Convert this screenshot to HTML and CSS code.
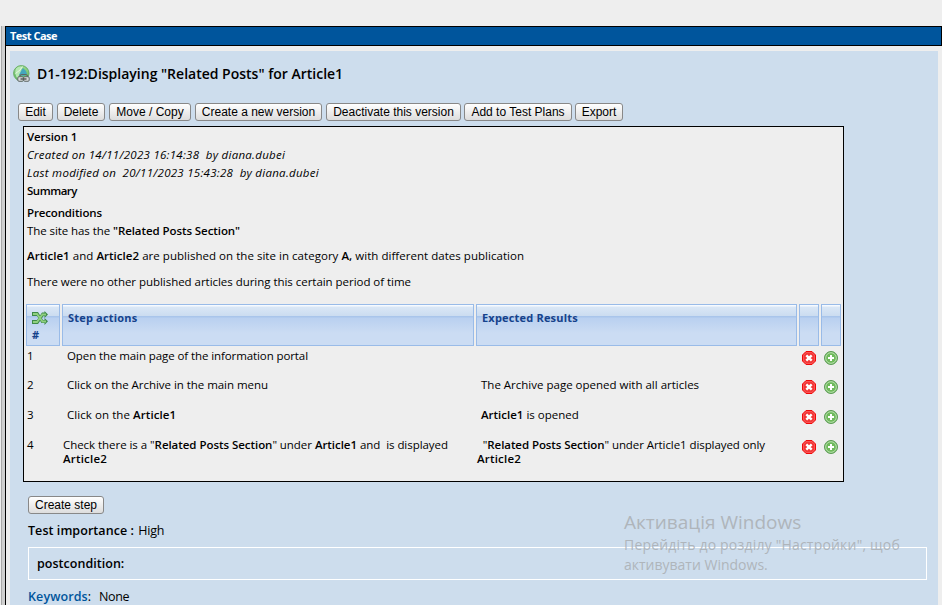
FILE: index.html
```
<!DOCTYPE html>
<html lang="en"><head><meta charset="utf-8"><title>Test Case</title><link rel="stylesheet" href="styles.css"></head>
<body>
<svg class="defs" width="0" height="0"><defs>
<linearGradient id="globeFill" x2="0" y2="1"><stop stop-color="#9bd98c"/><stop offset="1" stop-color="#58b45b"/></linearGradient>
<symbol id="remove" viewBox="0 0 14 14"><path d="M4 .5h6L13.500 4v6L10 13.500H4L.5 10V4z" fill="#f23535" stroke="#f00808"/><path d="M4.200 1.600h5.600l2.600 2.600v5.600l-2.600 2.600H4.200L1.600 9.800V4.200z" fill="none" stroke="#ff7070" stroke-width=".6"/><path d="M4.300 4.300l5.400 5.400M9.700 4.300l-5.400 5.400" stroke="#fff" stroke-width="2.400"/></symbol>
<symbol id="add" viewBox="0 0 14 14"><circle cx="7" cy="7" r="6.500" fill="#6fba5c" stroke="#5c9a56"/><circle cx="7" cy="7" r="5.300" fill="none" stroke="#b9dfaf" stroke-width="1"/><path d="M7 4v6M4 7h6" stroke="#fff" stroke-width="2"/></symbol>
</defs></svg>
<div class="frame">
 <div class="splitter"></div>
 <main class="content">
  <h1 class="bar">Test Case</h1>
  <section class="panel">
   <div class="heading">
    <svg width="18" height="18" viewBox="0 0 18 18"><circle cx="8.300" cy="8.300" r="7.700" fill="url(#globeFill)" stroke="#68ad66"/><path d="M3 3.500Q6 .5 10 2L8 5l2 1-4 4-1 4Q1 10 3 3.500z" fill="#b6e8b4"/><path d="M10 3l3 3 1 3-3 2-5-1 2-4z" fill="#45a6bd"/><path d="M2.500 8.500Q8 5 9.500 1.500" fill="none" stroke="#e3f6e1"/><path d="M7 12.500V11.500Q7 9.500 9 9.500h3.500q2 0 2 2v1" fill="none" stroke="#5d6666" stroke-width="1.200"/><rect x="4.800" y="11.700" width="5.600" height="4.600" rx="1.200" fill="#d4d8d8" stroke="#626a6a"/><rect x="10.600" y="11.700" width="5.600" height="4.600" rx="1.200" fill="#d4d8d8" stroke="#626a6a"/><path d="M7.500 14h6" stroke="#555" stroke-width="1.400"/></svg>
    <h2>D1-192:Displaying "Related Posts" for Article1</h2>
   </div>
   <div class="actions"><button class="w-edit">Edit</button><button class="w-del">Delete</button><button class="w-move">Move / Copy</button><button class="w-new">Create a new version</button><button class="w-off">Deactivate this version</button><button class="w-plan">Add to Test Plans</button><button class="w-exp">Export</button></div>
   <div class="case">
    <div class="line"><b class="tight">Version 1</b></div>
    <div class="line"><i>Created on 14/11/2023 16:14:38&nbsp; by diana.dubei</i></div>
    <div class="line"><i>Last modified on&nbsp; 20/11/2023 15:43:28&nbsp; by diana.dubei</i></div>
    <div class="line"><b class="tighter">Summary</b></div>
    <div class="line pre"><b class="tight">Preconditions</b></div>
    <div class="line site">The site has the <b>"Related Posts Section"</b></div>
    <div class="line para published"><b>Article1</b> and <b>Article2</b> are published on the site in category <b>A,</b> with different dates publication</div>
    <div class="line para last">There were no other published articles during this certain period of time</div>
    <div class="steps head">
     <div class="cell num"><svg width="17" height="14" viewBox="0 0 17 14"><path d="M0 1h6l5 8h1.500V7L16 10.300 12.500 14v-2H9.500L5 5H0zM0 9h5l5-7.500h2.500V0L16 3.500 12.500 7V5h-1L6 13H0z" fill="#3f8a48"/><path d="M1 3h4l5.500 7.500H14M1 11h4l5.500-7.500H14" fill="none" stroke="#8fd07f" stroke-width="1.800"/></svg><span>#</span></div>
     <div class="cell">Step actions</div><div class="cell">Expected Results</div><div class="cell"></div><div class="cell"></div>
    </div>
    <div class="steps row r1"><span>1</span><p class="in open">Open the main page of the information portal</p><p></p><svg><use href="#remove"/></svg><svg><use href="#add"/></svg></div>
    <div class="steps row r2"><span>2</span><p class="in click">Click on the Archive in the main menu</p><p class="in">The Archive page opened with all articles</p><svg><use href="#remove"/></svg><svg><use href="#add"/></svg></div>
    <div class="steps row r3"><span>3</span><p class="in article">Click on the <b>Article1</b></p><p class="in"><b>Article1</b> is opened</p><svg><use href="#remove"/></svg><svg><use href="#add"/></svg></div>
    <div class="steps row r4"><span>4</span><p class="check">Check there is a "<b>Related Posts Section</b>" under <b>Article1</b> and&nbsp; is displayed<br><b class="second">Article2</b></p><p class="shown">&nbsp; "<b>Related Posts Section</b>" under Article1 displayed only<br><b class="second">Article2</b></p><svg><use href="#remove"/></svg><svg><use href="#add"/></svg></div>
   </div>
   <div class="below">
    <button class="w-step">Create step</button>
    <div class="importance"><b>Test importance :</b> <span class="high">High</span></div>
    <div class="post"><b>postcondition:</b></div>
    <div class="keywords"><span><span class="kw">Keywords</span>:</span><span class="none">None</span></div>
   </div>
  </section>
 </main>
</div>
<aside class="notice"><div class="nt">Активація Windows</div><div class="ns settings">Перейдіть до розділу "Настройки", щоб</div><div class="ns">активувати Windows.</div></aside>
</body></html>
```
FILE: styles.css
```
* { box-sizing: border-box; }
body { margin: 0; width: 942px; height: 605px; overflow: hidden; padding-top: 26px; background: #eee; color: #000; font: 11.500px "Open Sans", sans-serif; }
.defs { position: absolute; }
b { font-weight: 600; }
h1, h2, p { margin: 0; }
.frame { display: flex; height: 579px; }
.splitter { margin-left: 1px; flex: none; width: 4px; border-left: 1px solid #a8a8a8; background: #d0d0d0; }
.content { flex: 1; border-left: 1px solid #000; }
.bar { height: 20px; margin-left: -1px; background: #00559c; border: 1px solid #000; color: #fff; font: 700 11px/18px "Open Sans", sans-serif; padding-left: 4px; letter-spacing: -.5px; }
.panel { margin: 5px 4px 0; height: 554px; background: #cddded; overflow: hidden; }
.heading { display: flex; align-items: center; gap: 6px; height: 46px; padding-left: 3px; }
h2 { font: 600 14px/18px "Open Sans", sans-serif; white-space: nowrap; }
.actions { display: flex; gap: 4px; margin: 6px 0 5px 8px; }
button { height: 18px; padding: 0; border: 1px solid #888; border-radius: 3px; background: linear-gradient(#fff, #ddd); color: #000; font: 12px/15px "Liberation Sans", sans-serif; white-space: nowrap; }
.w-edit { width: 35px; }
.w-del { width: 48px; }
.w-move { width: 82px; }
.w-new { width: 127px; }
.w-off { width: 135px; }
.w-plan { width: 108px; margin-left: -1px; }
.w-exp { width: 48px; margin-left: -1px; }
.w-step { width: 76px; display: block; }
.case { margin-left: 13px; width: 821px; height: 356px; border: 1px solid #000; background: #eee; padding: 1px 2px; }
.line { height: 18px; line-height: 18px; padding-left: 1px; white-space: nowrap; }
.line i { letter-spacing: .268px; }
.tight { letter-spacing: -.14px; }
.tighter { letter-spacing: -.48px; }
.pre { margin-top: 4px; }
.site { letter-spacing: -.076px; }
.para { margin-top: 7px; }
.published { letter-spacing: .035px; }
.last { margin-top: 8px; letter-spacing: -.035px; }
.steps { display: grid; grid-template-columns: 34px 412px 321px 20px 20px; column-gap: 2px; }
.head { margin-top: 13px; height: 42px; }
.cell { height: 42px; border: 1px solid #99bbe8; background: linear-gradient(#f6faff 0 1px, #dae7f6 2px, #cbdcf0 11px, #a9c5eb 11px 12px, #b9d0f0 13px, #cbdcf3 28px); padding: 4px 5px; color: #15428b; font: 700 11px/17px "Open Sans", sans-serif; letter-spacing: .19px; }
.num { padding: 6px 5px; }
.num svg, .num span { display: block; }
.num span { line-height: 19px; }
.row { height: 30px; padding-top: 3px; line-height: 14px; white-space: nowrap; }
.row > span { padding-left: 1px; }
.row > p { padding-left: 1px; }
.row > .in { padding-left: 5px; }
.row svg { width: 14px; height: 14px; margin: 2px 0 0 3px; }
.r1 { height: 29px; }
.open { letter-spacing: -.092px; }
.click { letter-spacing: -.041px; }
.article { letter-spacing: .07px; }
.check { letter-spacing: -.045px; }
.shown { letter-spacing: -.076px; }
.second { letter-spacing: .19px; }
.below { margin: 14px 11px 0 18px; font-size: 12.500px; }
.importance { margin-top: 8px; height: 18px; line-height: 18px; letter-spacing: .06px; }
.high { margin-left: 1px; letter-spacing: -.2px; }
.post { margin-top: 7px; height: 33px; border: 1px solid #fff; line-height: 31px; padding-left: 8px; letter-spacing: .03px; }
.keywords { display: flex; gap: 8px; margin-top: 8px; line-height: 18px; }
.kw { color: #00559c; font-weight: 600; letter-spacing: .1px; }
.none { letter-spacing: -.4px; }
.notice { position: absolute; left: 624px; top: 510px; color: #afb5bb; font-family: "Open Sans", sans-serif; white-space: nowrap; }
.nt { font-size: 19px; line-height: 25px; }
.ns { font-size: 14px; line-height: 20px; }
.settings { letter-spacing: .197px; }
```
